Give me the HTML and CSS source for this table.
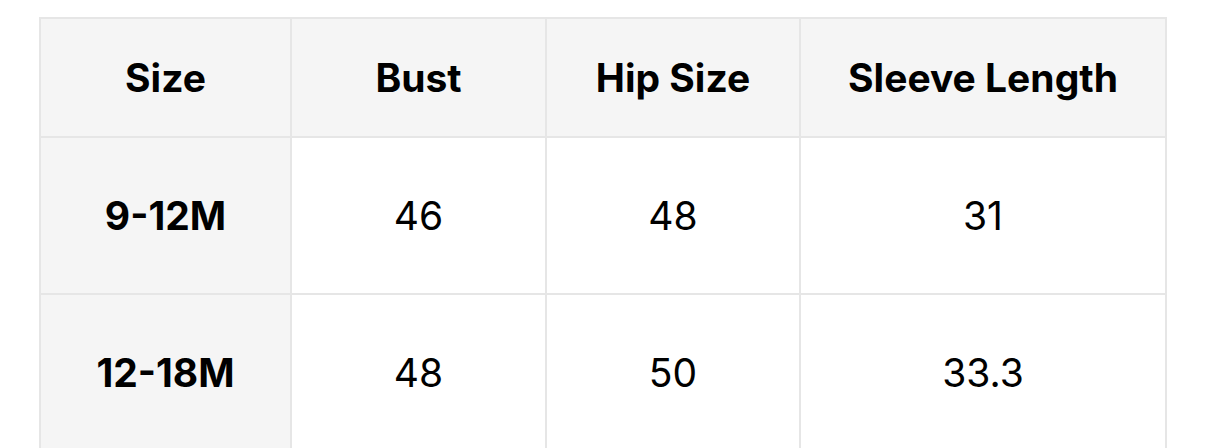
FILE: index.html
```html
<!DOCTYPE html>
<html>
<head>
<meta charset="utf-8">
<link rel="stylesheet" href="styles.css">
</head>
<body>
<table class="size-table">
  <colgroup>
    <col class="c1"><col class="c2"><col class="c3"><col class="c4">
  </colgroup>
  <thead>
    <tr class="head-row">
      <th>Size</th><th>Bust</th><th>Hip Size</th><th>Sleeve Length</th>
    </tr>
  </thead>
  <tbody>
    <tr class="body-row">
      <th class="row-label">9-12M</th><td>46</td><td>48</td><td>31</td>
    </tr>
    <tr class="body-row">
      <th class="row-label">12-18M</th><td>48</td><td>50</td><td>33.3</td>
    </tr>
  </tbody>
</table>
</body>
</html>
```
FILE: styles.css
```css
html, body {
  margin: 0;
  padding: 0;
  background: #fff;
}
body {
  padding: 17px 0 0 39px;
  font-family: Inter, "Liberation Sans", sans-serif;
  color: #000;
}
.size-table {
  border-collapse: collapse;
  table-layout: fixed;
  width: 1128px;
}
.c1 { width: 251px; }
.c2 { width: 255px; }
.c3 { width: 254px; }
.c4 { width: 366px; }
.size-table th,
.size-table td {
  border: 2px solid #e6e6e6;
  text-align: center;
  vertical-align: middle;
  padding: 0;
  font-size: 39px;
}
.size-table th {
  font-weight: 700;
  background: #f5f5f5;
}
.size-table td {
  font-weight: 400;
  background: #fff;
}
.head-row { height: 119px; }
.body-row { height: 157px; }
```
